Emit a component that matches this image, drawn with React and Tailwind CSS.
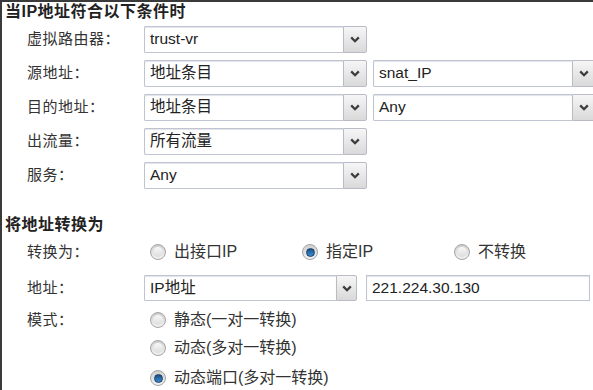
import React from 'react'

const font = "font-['Liberation_Sans','Noto_Sans_CJK_SC',sans-serif]"

function Chevron() {
  return (
    <svg width="10" height="7" viewBox="0 0 10 7" className="block">
      <polyline points="1.2,1.4 5,5.2 8.8,1.4" fill="none" stroke="#3d3d3d" strokeWidth="2.3" />
    </svg>
  )
}

function Select({ value, width = 'w-[223px]', button = 'w-[24px]', height = 'h-[27px]' }) {
  return (
    <div className={`flex ${width} ${height} shrink-0`}>
      <div className="flex-1 flex items-center border border-[#bfc3d2] border-r-0 bg-white shadow-[inset_0_1px_1px_#e2e4ea] px-[5px] text-[15.5px] text-[#222] rounded-l-[2px]">
        {value}
      </div>
      <div className={`${button} flex items-center justify-center border border-[#b9bcc4] bg-linear-to-b from-[#f6f6f6] to-[#d9d9d9] rounded-r-[2px]`}>
        <Chevron />
      </div>
    </div>
  )
}

function Radio({ checked, label }) {
  return (
    <div className="flex items-center gap-[8px]">
      <span className="w-[16px] h-[16px] rounded-full border border-[#a4a4a4] bg-linear-to-b from-[#cfcfcf] to-[#f2f2f2] flex items-center justify-center shrink-0">
        {checked ? (
          <span className="w-[9px] h-[9px] rounded-full bg-linear-to-b from-[#1b4f86] to-[#3a8ed6] border border-[#173c66]" />
        ) : (
          <span className="w-[10px] h-[10px] rounded-full bg-linear-to-b from-[#f7f7f7] to-[#dddddd]" />
        )}
      </span>
      <span className="text-[16px] text-[#333]">{label}</span>
    </div>
  )
}

function Row({ label, children, h = 'h-[34px]' }) {
  return (
    <div className={`flex items-center ${h}`}>
      <div className="w-[142px] pl-[25px] text-[15px] text-[#333] tracking-[0.5px] shrink-0">{label}</div>
      {children}
    </div>
  )
}

export default function App() {
  return (
    <div className={`w-[593px] h-[390px] overflow-hidden bg-white border-l-2 border-t-2 border-[#3a3a3a] ${font}`}>
      <div className="h-[20px] pl-[3px] flex items-center text-[16px] font-bold text-[#222] tracking-[0.5px]">
        当IP地址符合以下条件时
      </div>

      <Row label="虚拟路由器：">
        <Select value="trust-vr" />
      </Row>
      <Row label="源地址：">
        <div className="flex gap-[6px]">
          <Select value="地址条目" />
          <Select value="snat_IP" />
        </div>
      </Row>
      <Row label="目的地址：">
        <div className="flex gap-[6px]">
          <Select value="地址条目" />
          <Select value="Any" />
        </div>
      </Row>
      <Row label="出流量：">
        <Select value="所有流量" />
      </Row>
      <Row label="服务：">
        <Select value="Any" />
      </Row>

      <div className="h-[20px] mt-[23px] pl-[3px] flex items-center text-[16px] font-bold text-[#222] tracking-[0.5px]">
        将地址转换为
      </div>

      <Row label="转换为：">
        <div className="flex">
          <div className="w-[158px] pl-[6px]"><Radio label="出接口IP" /></div>
          <div className="w-[152px]"><Radio checked label="指定IP" /></div>
          <div><Radio label="不转换" /></div>
        </div>
      </Row>

      <Row label="地址：" h="h-[38px]">
        <div className="flex gap-[9px]">
          <Select value="IP地址" width="w-[213px]" button="w-[21px]" height="h-[26px]" />
          <div className="w-[224px] h-[26px] flex items-center border border-[#bfc3d2] shadow-[inset_0_1px_1px_#e2e4ea] px-[5px] text-[15.5px] text-[#222]">
            221.224.30.130
          </div>
        </div>
      </Row>

      <Row label="模式：" h="h-[26px]">
        <div className="pl-[6px]"><Radio label="静态(一对一转换)" /></div>
      </Row>
      <Row label="" h="h-[30px]">
        <div className="pl-[6px]"><Radio label="动态(多对一转换)" /></div>
      </Row>
      <Row label="" h="h-[30px]">
        <div className="pl-[6px]"><Radio checked label="动态端口(多对一转换)" /></div>
      </Row>
    </div>
  )
}
